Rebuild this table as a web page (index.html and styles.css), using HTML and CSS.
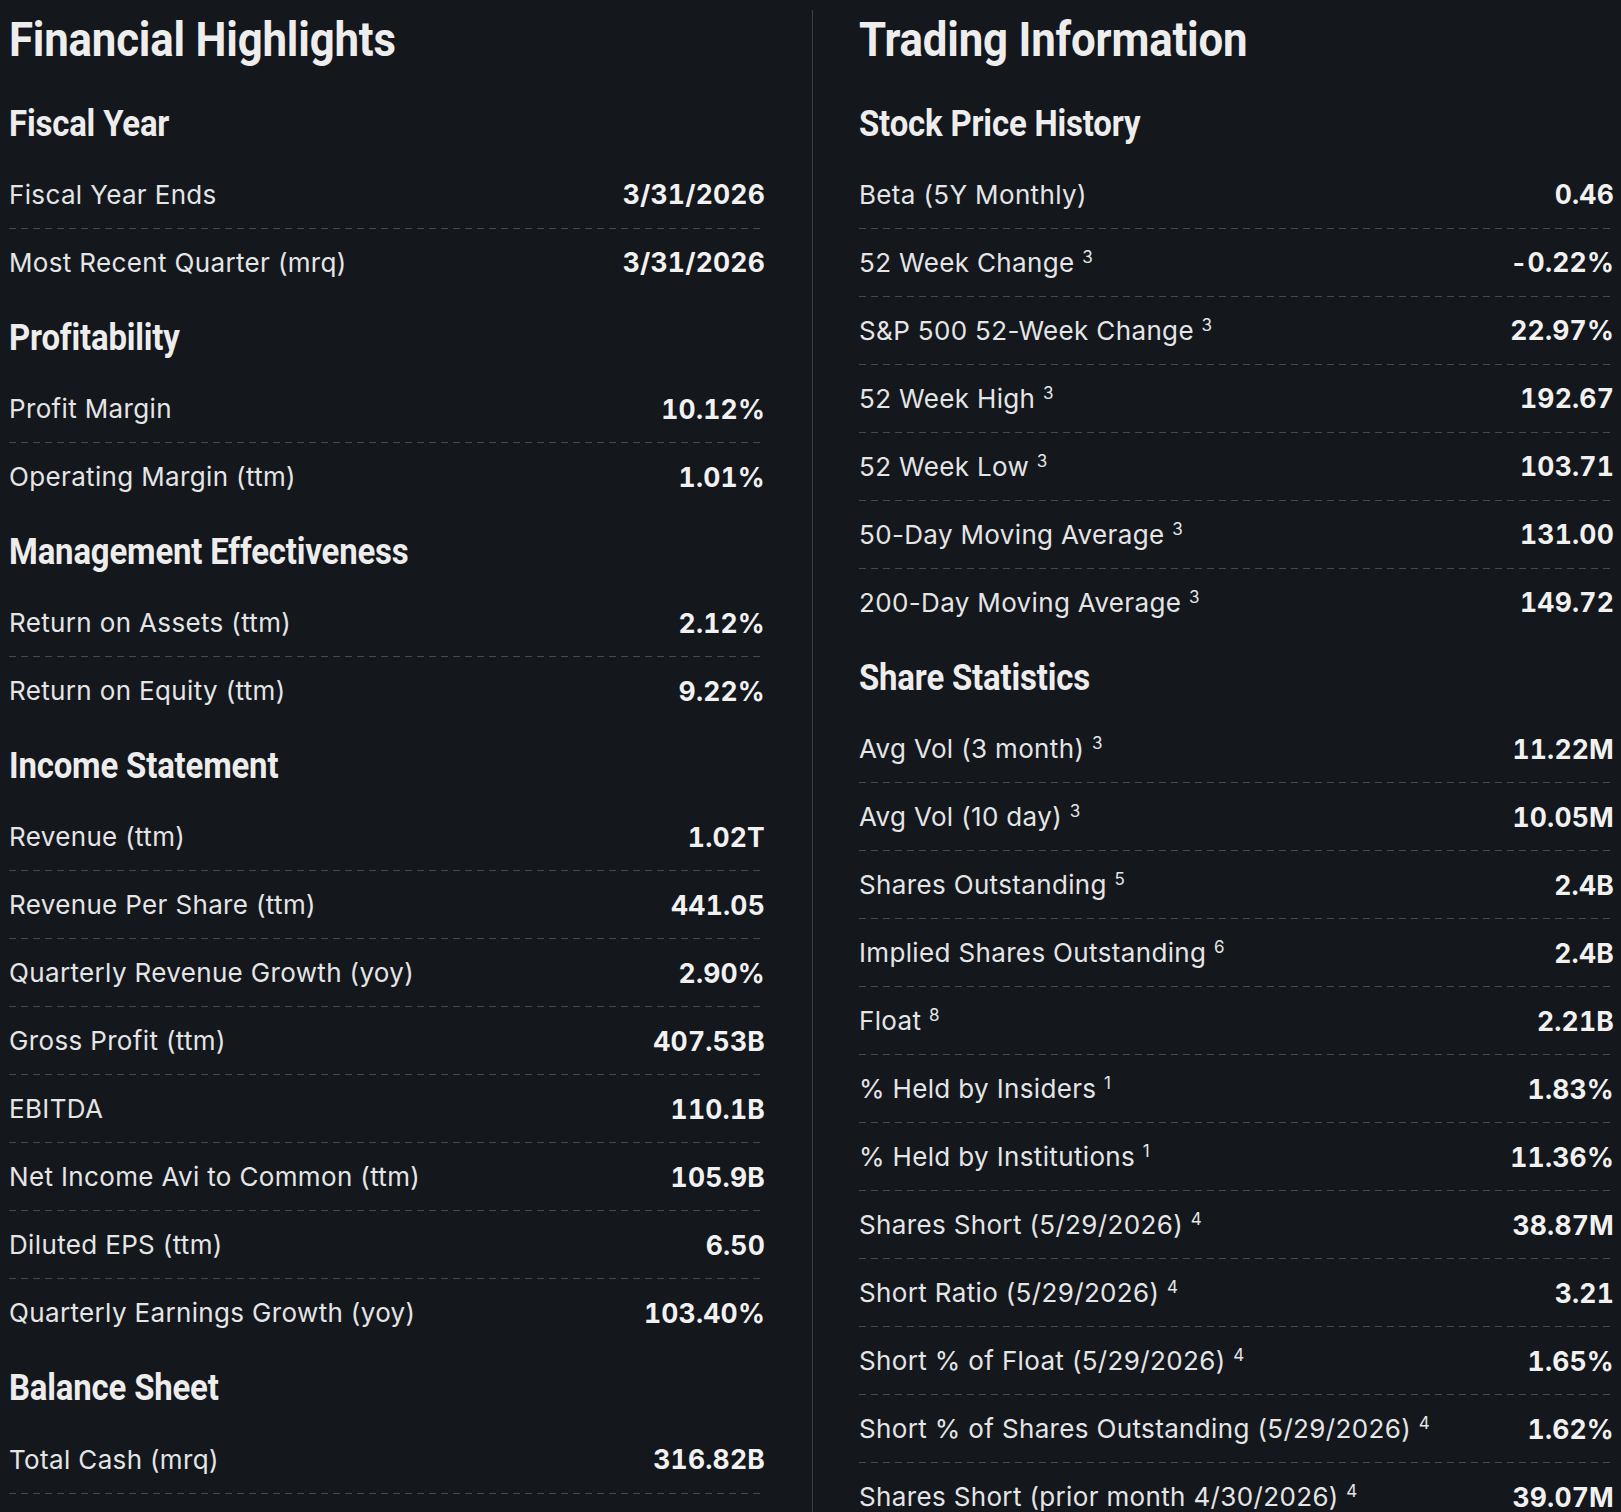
FILE: index.html
```html
<!DOCTYPE html>
<html lang="en">
<head>
<meta charset="utf-8">
<title>Statistics</title>
<link rel="stylesheet" href="styles.css">
</head>
<body>
<div class="page">
  <section class="col col-left">
    <h2 class="title">Financial Highlights</h2>

    <div class="group">
      <h3 class="group-title">Fiscal Year</h3>
      <div class="row"><span class="label">Fiscal Year Ends</span><span class="value">3/31/2026</span></div>
      <div class="row"><span class="label">Most Recent Quarter (mrq)</span><span class="value">3/31/2026</span></div>
    </div>

    <div class="group">
      <h3 class="group-title">Profitability</h3>
      <div class="row"><span class="label">Profit Margin</span><span class="value">10.12%</span></div>
      <div class="row"><span class="label">Operating Margin (ttm)</span><span class="value">1.01%</span></div>
    </div>

    <div class="group">
      <h3 class="group-title">Management Effectiveness</h3>
      <div class="row"><span class="label">Return on Assets (ttm)</span><span class="value">2.12%</span></div>
      <div class="row"><span class="label">Return on Equity (ttm)</span><span class="value">9.22%</span></div>
    </div>

    <div class="group">
      <h3 class="group-title">Income Statement</h3>
      <div class="row"><span class="label">Revenue (ttm)</span><span class="value">1.02T</span></div>
      <div class="row"><span class="label">Revenue Per Share (ttm)</span><span class="value">441.05</span></div>
      <div class="row"><span class="label">Quarterly Revenue Growth (yoy)</span><span class="value">2.90%</span></div>
      <div class="row"><span class="label">Gross Profit (ttm)</span><span class="value">407.53B</span></div>
      <div class="row"><span class="label">EBITDA</span><span class="value">110.1B</span></div>
      <div class="row"><span class="label">Net Income Avi to Common (ttm)</span><span class="value">105.9B</span></div>
      <div class="row"><span class="label">Diluted EPS (ttm)</span><span class="value">6.50</span></div>
      <div class="row"><span class="label">Quarterly Earnings Growth (yoy)</span><span class="value">103.40%</span></div>
    </div>

    <div class="group">
      <h3 class="group-title">Balance Sheet</h3>
      <div class="row row-continued"><span class="label">Total Cash (mrq)</span><span class="value">316.82B</span></div>
    </div>
  </section>

  <section class="col col-right">
    <h2 class="title">Trading Information</h2>

    <div class="group">
      <h3 class="group-title">Stock Price History</h3>
      <div class="row"><span class="label">Beta (5Y Monthly)</span><span class="value">0.46</span></div>
      <div class="row"><span class="label">52 Week Change <sup>3</sup></span><span class="value">-0.22%</span></div>
      <div class="row"><span class="label">S&amp;P 500 52-Week Change <sup>3</sup></span><span class="value">22.97%</span></div>
      <div class="row"><span class="label">52 Week High <sup>3</sup></span><span class="value">192.67</span></div>
      <div class="row"><span class="label">52 Week Low <sup>3</sup></span><span class="value">103.71</span></div>
      <div class="row"><span class="label">50-Day Moving Average <sup>3</sup></span><span class="value">131.00</span></div>
      <div class="row"><span class="label">200-Day Moving Average <sup>3</sup></span><span class="value">149.72</span></div>
    </div>

    <div class="group">
      <h3 class="group-title">Share Statistics</h3>
      <div class="row"><span class="label">Avg Vol (3 month) <sup>3</sup></span><span class="value">11.22M</span></div>
      <div class="row"><span class="label">Avg Vol (10 day) <sup>3</sup></span><span class="value">10.05M</span></div>
      <div class="row"><span class="label">Shares Outstanding <sup>5</sup></span><span class="value">2.4B</span></div>
      <div class="row"><span class="label">Implied Shares Outstanding <sup>6</sup></span><span class="value">2.4B</span></div>
      <div class="row"><span class="label">Float <sup>8</sup></span><span class="value">2.21B</span></div>
      <div class="row"><span class="label">% Held by Insiders <sup>1</sup></span><span class="value">1.83%</span></div>
      <div class="row"><span class="label">% Held by Institutions <sup>1</sup></span><span class="value">11.36%</span></div>
      <div class="row"><span class="label">Shares Short (5/29/2026) <sup>4</sup></span><span class="value">38.87M</span></div>
      <div class="row"><span class="label">Short Ratio (5/29/2026) <sup>4</sup></span><span class="value">3.21</span></div>
      <div class="row"><span class="label">Short % of Float (5/29/2026) <sup>4</sup></span><span class="value">1.65%</span></div>
      <div class="row"><span class="label">Short % of Shares Outstanding (5/29/2026) <sup>4</sup></span><span class="value">1.62%</span></div>
      <div class="row"><span class="label">Shares Short (prior month 4/30/2026) <sup>4</sup></span><span class="value">39.07M</span></div>
    </div>
  </section>
</div>
</body>
</html>
```

FILE: styles.css
```css
html, body {
  margin: 0;
  padding: 0;
  background: #14171c;
}

.page {
  display: flex;
  box-sizing: border-box;
  height: 1512px;
  overflow: hidden;
  padding: 10px 7px 0 9px;
  color: #e4e5e7;
}

.col {
  display: flex;
  flex-direction: column;
  min-width: 0;
}

.col-left {
  flex: 0 0 756px;
  margin-right: 47px;
}

.col-right {
  flex: 1 1 auto;
  border-left: 1px solid #3b3e44;
  padding-left: 46px;
}

.title,
.group-title {
  align-self: flex-start;
  font-family: "Roboto", "Liberation Sans", sans-serif;
  font-weight: 700;
  color: #ededee;
  margin: 0;
  white-space: nowrap;
  transform-origin: left center;
  letter-spacing: -0.2px;
}

.title {
  font-size: 48px;
  line-height: 57px;
  margin-top: 1px;
  margin-bottom: 13.7px;
  transform: scaleX(0.912);
}

.group {
  display: flex;
  flex-direction: column;
}

.group-title {
  font-size: 37px;
  line-height: 44px;
  margin: 20px 0 15.2px;
  transform: scaleX(0.89);
}

.row {
  display: flex;
  justify-content: space-between;
  align-items: center;
  box-sizing: border-box;
  height: 68px;
  padding-bottom: 1px;
  background-image: repeating-linear-gradient(90deg, #46494f 0 7px, transparent 7px 12px);
  background-size: 100% 1px;
  background-position: left bottom;
  background-repeat: no-repeat;
}

.row:last-child {
  height: 67px;
  padding-bottom: 0;
  background-image: none;
}

.row.row-continued {
  height: 68px;
  padding-bottom: 1px;
  background-image: repeating-linear-gradient(90deg, #46494f 0 7px, transparent 7px 12px);
}

.label {
  font-family: "Inter", "Liberation Sans", sans-serif;
  font-size: 26px;
  letter-spacing: 0.35px;
  font-weight: 400;
  color: #e4e5e7;
  white-space: nowrap;
}

.label sup {
  font-size: 17px;
  line-height: 1;
  vertical-align: 9px;
  letter-spacing: 0;
}

.value {
  font-family: "Inter", "Liberation Sans", sans-serif;
  font-size: 26.5px;
  font-weight: 700;
  font-variant-numeric: tabular-nums;
  letter-spacing: 0.2px;
  color: #f1f1f2;
  white-space: nowrap;
}
```
